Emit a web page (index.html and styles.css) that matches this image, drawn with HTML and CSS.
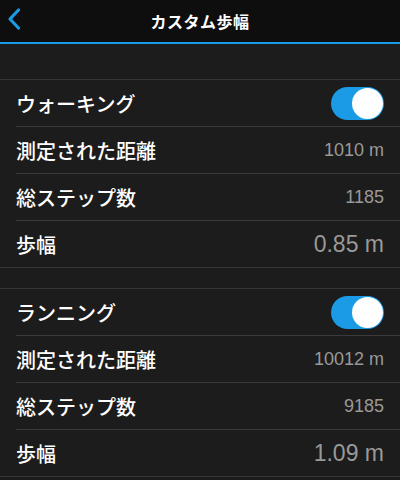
FILE: index.html
```html
<!DOCTYPE html>
<html lang="ja">
<head>
  <meta charset="UTF-8" />
  <title>カスタム歩幅</title>
  <link rel="stylesheet" href="styles.css">
</head>
<body>

  <header class="topbar">
    <svg class="back" width="16" height="24" viewBox="0 0 16 24">
      <path d="M12.5 3 L4 12 L12.5 21" fill="none" stroke="#1b9be6" stroke-width="3.2" stroke-linecap="round" stroke-linejoin="round"/>
    </svg>
    <div class="title">カスタム歩幅</div>
  </header>

  <section class="group first">
    <div class="row">
      <div class="row-inner">
        <span class="label">ウォーキング</span>
        <span class="toggle"><span class="knob"></span></span>
      </div>
    </div>
    <div class="row">
      <div class="row-inner">
        <span class="label">測定された距離</span>
        <span class="value">1010 m</span>
      </div>
    </div>
    <div class="row">
      <div class="row-inner">
        <span class="label">総ステップ数</span>
        <span class="value">1185</span>
      </div>
    </div>
    <div class="row">
      <div class="row-inner">
        <span class="label">歩幅</span>
        <span class="value big">0.85 m</span>
      </div>
    </div>
  </section>

  <section class="group">
    <div class="row">
      <div class="row-inner">
        <span class="label">ランニング</span>
        <span class="toggle"><span class="knob"></span></span>
      </div>
    </div>
    <div class="row">
      <div class="row-inner">
        <span class="label">測定された距離</span>
        <span class="value">10012 m</span>
      </div>
    </div>
    <div class="row">
      <div class="row-inner">
        <span class="label">総ステップ数</span>
        <span class="value">9185</span>
      </div>
    </div>
    <div class="row">
      <div class="row-inner">
        <span class="label">歩幅</span>
        <span class="value big">1.09 m</span>
      </div>
    </div>
  </section>

</body>
</html>
```

FILE: styles.css
```css
body {
  margin: 0;
  background: #1c1c1c;
  color: #fff;
  font-family: "Noto Sans CJK JP", "Liberation Sans", sans-serif;
  width: 400px;
  height: 480px;
  overflow: hidden;
}

.topbar {
  position: relative;
  height: 42px;
  background: #0e0e0e;
  border-bottom: 2px solid #1b9be6;
  display: flex;
  align-items: center;
  justify-content: center;
}

.back {
  position: absolute;
  left: 6px;
  top: 7px;
}

.title {
  font-size: 16px;
  font-weight: bold;
  letter-spacing: 0.5px;
}

.group {
  border-top: 1px solid #363636;
  margin-top: 20px;
}

.group.first {
  margin-top: 35px;
}

.row {
  padding-left: 16px;
}

.row-inner {
  height: 46px;
  padding-right: 16px;
  display: flex;
  align-items: center;
  justify-content: space-between;
  border-bottom: 1px solid #3a3a3a;
}

.row:last-child {
  border-bottom: 1px solid #363636;
}

.row:last-child .row-inner {
  border-bottom: none;
}

.label {
  font-size: 20px;
  font-weight: 500;
}

.value {
  font-family: "Liberation Sans", sans-serif;
  font-size: 18px;
  color: #999;
}

.value.big {
  font-size: 23px;
}

.toggle {
  width: 53px;
  height: 33px;
  border-radius: 17px;
  background: #1b9be6;
  display: flex;
  align-items: center;
  justify-content: flex-end;
  padding-right: 1px;
  box-sizing: border-box;
}

.knob {
  width: 31px;
  height: 31px;
  border-radius: 50%;
  background: #fff;
}
```
